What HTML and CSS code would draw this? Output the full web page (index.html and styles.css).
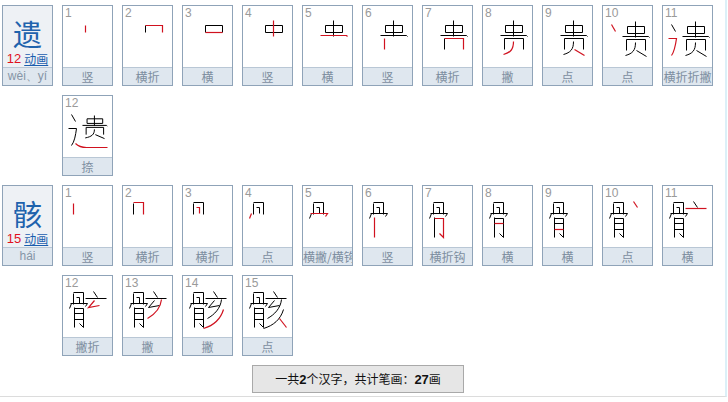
FILE: index.html
```html
<!DOCTYPE html>
<html lang="zh">
<head>
<meta charset="utf-8">
<title>笔顺</title>
<link rel="stylesheet" href="styles.css">
</head>
<body>
<svg class="defs" width="0" height="0" aria-hidden="true">
  <defs>
    <path id="y1" d="M23 20V27" vector-effect="non-scaling-stroke"/>
    <path id="y2" d="M23 20H40V27" vector-effect="non-scaling-stroke"/>
    <path id="y3" d="M23 27H40" vector-effect="non-scaling-stroke"/>
    <path id="y4" d="M31 15V31" vector-effect="non-scaling-stroke"/>
    <path id="y5" d="M18 30H44L45 31" vector-effect="non-scaling-stroke"/>
    <path id="y6" d="M22 33V44" vector-effect="non-scaling-stroke"/>
    <path id="y7" d="M22 33H41V44" vector-effect="non-scaling-stroke"/>
    <path id="y8" d="M31 36C31 44 28 47 21 49" vector-effect="non-scaling-stroke"/>
    <path id="y9" d="M32 44L42 50" vector-effect="non-scaling-stroke"/>
    <path id="y10" d="M9 19L13 26" vector-effect="non-scaling-stroke"/>
    <path id="y11" d="M6 33H14C13 40 12 46 9 50" vector-effect="non-scaling-stroke"/>
    <path id="y12" d="M13 48Q17 52 24 52H45" vector-effect="non-scaling-stroke"/>
    <g id="gui">
      <use href="#y1"/><use href="#y2"/><use href="#y3"/><use href="#y4"/><use href="#y5"/>
      <use href="#y6"/><use href="#y7"/><use href="#y8"/><use href="#y9"/>
    </g>

    <path id="h1" d="M11 18V29" vector-effect="non-scaling-stroke"/>
    <path id="h2" d="M11 17H21V29" vector-effect="non-scaling-stroke"/>
    <path id="h3" d="M14 22H17V28" vector-effect="non-scaling-stroke"/>
    <path id="h4" d="M9 28L7 33" vector-effect="non-scaling-stroke"/>
    <path id="h5" d="M8 28H25L23 31" vector-effect="non-scaling-stroke"/>
    <path id="h6" d="M12 32V52" vector-effect="non-scaling-stroke"/>
    <path id="h7" d="M12 33H21V52L17 48" vector-effect="non-scaling-stroke"/>
    <path id="h8" d="M12 38H21" vector-effect="non-scaling-stroke"/>
    <path id="h9" d="M12 44H21" vector-effect="non-scaling-stroke"/>
    <path id="h10" d="M31 16L35 22" vector-effect="non-scaling-stroke"/>
    <path id="h11" d="M23 23H44" vector-effect="non-scaling-stroke"/>
    <path id="h12" d="M32 25L26 32L37 30" vector-effect="non-scaling-stroke"/>
    <path id="h13" d="M39 24C38 33 32 39 25 43" vector-effect="non-scaling-stroke"/>
    <path id="h14" d="M41 34C38 44 31 50 21 53" vector-effect="non-scaling-stroke"/>
    <path id="h15" d="M37 43L44 52" vector-effect="non-scaling-stroke"/>
    <g id="gu">
      <use href="#h1"/><use href="#h2"/><use href="#h3"/><use href="#h4"/><use href="#h5"/>
      <use href="#h6"/><use href="#h7"/><use href="#h8"/><use href="#h9"/>
    </g>
  </defs>
</svg>

<div class="page">
  <div class="char">
    <div class="head">
      <div class="big">遗</div>
      <div class="meta"><span class="cnt">12</span> <a class="anim" href="#">动画</a></div>
      <div class="py">wèi、yí</div>
    </div>
    <div class="cells">
      <div class="cell"><span class="num">1</span><svg class="pic" viewBox="0.5 0.5 49 61"><use class="r" href="#y1"/></svg><div class="lbl">竖</div></div>
      <div class="cell"><span class="num">2</span><svg class="pic" viewBox="0.5 0.5 49 61"><use class="k" href="#y1"/><use class="r" href="#y2"/></svg><div class="lbl">横折</div></div>
      <div class="cell"><span class="num">3</span><svg class="pic" viewBox="0.5 0.5 49 61"><use class="k" href="#y1"/><use class="k" href="#y2"/><use class="r" href="#y3"/></svg><div class="lbl">横</div></div>
      <div class="cell"><span class="num">4</span><svg class="pic" viewBox="0.5 0.5 49 61"><use class="k" href="#y1"/><use class="k" href="#y2"/><use class="k" href="#y3"/><use class="r" href="#y4"/></svg><div class="lbl">竖</div></div>
      <div class="cell"><span class="num">5</span><svg class="pic" viewBox="0.5 0.5 49 61"><use class="k" href="#y1"/><use class="k" href="#y2"/><use class="k" href="#y3"/><use class="k" href="#y4"/><use class="r" href="#y5"/></svg><div class="lbl">横</div></div>
      <div class="cell"><span class="num">6</span><svg class="pic" viewBox="0.5 0.5 49 61"><use class="k" href="#y1"/><use class="k" href="#y2"/><use class="k" href="#y3"/><use class="k" href="#y4"/><use class="k" href="#y5"/><use class="r" href="#y6"/></svg><div class="lbl">竖</div></div>
      <div class="cell"><span class="num">7</span><svg class="pic" viewBox="0.5 0.5 49 61"><use class="k" href="#y1"/><use class="k" href="#y2"/><use class="k" href="#y3"/><use class="k" href="#y4"/><use class="k" href="#y5"/><use class="k" href="#y6"/><use class="r" href="#y7"/></svg><div class="lbl">横折</div></div>
      <div class="cell"><span class="num">8</span><svg class="pic" viewBox="0.5 0.5 49 61"><use class="k" href="#y1"/><use class="k" href="#y2"/><use class="k" href="#y3"/><use class="k" href="#y4"/><use class="k" href="#y5"/><use class="k" href="#y6"/><use class="k" href="#y7"/><use class="r" href="#y8"/></svg><div class="lbl">撇</div></div>
      <div class="cell"><span class="num">9</span><svg class="pic" viewBox="0.5 0.5 49 61"><use class="k" href="#y1"/><use class="k" href="#y2"/><use class="k" href="#y3"/><use class="k" href="#y4"/><use class="k" href="#y5"/><use class="k" href="#y6"/><use class="k" href="#y7"/><use class="k" href="#y8"/><use class="r" href="#y9"/></svg><div class="lbl">点</div></div>
      <div class="cell"><span class="num">10</span><svg class="pic" viewBox="0.5 0.5 49 61"><use class="k" href="#gui" transform="translate(2 1)"/><use class="r" href="#y10"/></svg><div class="lbl">点</div></div>
      <div class="cell"><span class="num">11</span><svg class="pic" viewBox="0.5 0.5 49 61"><use class="k" href="#gui" transform="translate(2 1)"/><use class="k" href="#y10"/><use class="r" href="#y11"/></svg><div class="lbl">横折折撇</div></div>
      <div class="cell"><span class="num">12</span><svg class="pic" viewBox="0.5 0.5 49 61"><use class="k" href="#gui" transform="translate(3.4 10.1) scale(0.92 0.66)"/><use class="k" href="#y10"/><use class="k" href="#y11"/><use class="r" href="#y12"/></svg><div class="lbl">捺</div></div>
    </div>
  </div>

  <div class="char">
    <div class="head">
      <div class="big">骸</div>
      <div class="meta"><span class="cnt">15</span> <a class="anim" href="#">动画</a></div>
      <div class="py">hái</div>
    </div>
    <div class="cells">
      <div class="cell"><span class="num">1</span><svg class="pic" viewBox="0.5 0.5 49 61"><use class="r" href="#h1"/></svg><div class="lbl">竖</div></div>
      <div class="cell"><span class="num">2</span><svg class="pic" viewBox="0.5 0.5 49 61"><use class="k" href="#h1"/><use class="r" href="#h2"/></svg><div class="lbl">横折</div></div>
      <div class="cell"><span class="num">3</span><svg class="pic" viewBox="0.5 0.5 49 61"><use class="k" href="#h1"/><use class="k" href="#h2"/><use class="r" href="#h3"/></svg><div class="lbl">横折</div></div>
      <div class="cell"><span class="num">4</span><svg class="pic" viewBox="0.5 0.5 49 61"><use class="k" href="#h1"/><use class="k" href="#h2"/><use class="k" href="#h3"/><use class="r" href="#h4"/></svg><div class="lbl">点</div></div>
      <div class="cell"><span class="num">5</span><svg class="pic" viewBox="0.5 0.5 49 61"><use class="k" href="#h1"/><use class="k" href="#h2"/><use class="k" href="#h3"/><use class="k" href="#h4"/><use class="r" href="#h5"/></svg><div class="lbl">横撇/横钩</div></div>
      <div class="cell"><span class="num">6</span><svg class="pic" viewBox="0.5 0.5 49 61"><use class="k" href="#h1"/><use class="k" href="#h2"/><use class="k" href="#h3"/><use class="k" href="#h4"/><use class="k" href="#h5"/><use class="r" href="#h6"/></svg><div class="lbl">竖</div></div>
      <div class="cell"><span class="num">7</span><svg class="pic" viewBox="0.5 0.5 49 61"><use class="k" href="#h1"/><use class="k" href="#h2"/><use class="k" href="#h3"/><use class="k" href="#h4"/><use class="k" href="#h5"/><use class="k" href="#h6"/><use class="r" href="#h7"/></svg><div class="lbl">横折钩</div></div>
      <div class="cell"><span class="num">8</span><svg class="pic" viewBox="0.5 0.5 49 61"><use class="k" href="#h1"/><use class="k" href="#h2"/><use class="k" href="#h3"/><use class="k" href="#h4"/><use class="k" href="#h5"/><use class="k" href="#h6"/><use class="k" href="#h7"/><use class="r" href="#h8"/></svg><div class="lbl">横</div></div>
      <div class="cell"><span class="num">9</span><svg class="pic" viewBox="0.5 0.5 49 61"><use class="k" href="#h1"/><use class="k" href="#h2"/><use class="k" href="#h3"/><use class="k" href="#h4"/><use class="k" href="#h5"/><use class="k" href="#h6"/><use class="k" href="#h7"/><use class="k" href="#h8"/><use class="r" href="#h9"/></svg><div class="lbl">横</div></div>
      <div class="cell"><span class="num">10</span><svg class="pic" viewBox="0.5 0.5 49 61"><use class="k" href="#gu"/><use class="r" href="#h10"/></svg><div class="lbl">点</div></div>
      <div class="cell"><span class="num">11</span><svg class="pic" viewBox="0.5 0.5 49 61"><use class="k" href="#gu"/><use class="k" href="#h10"/><use class="r" href="#h11"/></svg><div class="lbl">横</div></div>
      <div class="cell"><span class="num">12</span><svg class="pic" viewBox="0.5 0.5 49 61"><use class="k" href="#gu"/><use class="k" href="#h10"/><use class="k" href="#h11"/><use class="r" href="#h12"/></svg><div class="lbl">撇折</div></div>
      <div class="cell"><span class="num">13</span><svg class="pic" viewBox="0.5 0.5 49 61"><use class="k" href="#gu"/><use class="k" href="#h10"/><use class="k" href="#h11"/><use class="k" href="#h12"/><use class="r" href="#h13"/></svg><div class="lbl">撇</div></div>
      <div class="cell"><span class="num">14</span><svg class="pic" viewBox="0.5 0.5 49 61"><use class="k" href="#gu"/><use class="k" href="#h10"/><use class="k" href="#h11"/><use class="k" href="#h12"/><use class="k" href="#h13"/><use class="r" href="#h14"/></svg><div class="lbl">撇</div></div>
      <div class="cell"><span class="num">15</span><svg class="pic" viewBox="0.5 0.5 49 61"><use class="k" href="#gu"/><use class="k" href="#h10"/><use class="k" href="#h11"/><use class="k" href="#h12"/><use class="k" href="#h13"/><use class="k" href="#h14"/><use class="r" href="#h15"/></svg><div class="lbl">点</div></div>
    </div>
  </div>

  <div class="summary">一共<b>2</b>个汉字，共计笔画：<b>27</b>画</div>
</div>
</body>
</html>
```

FILE: styles.css
```css
* {
  box-sizing: border-box;
}

body {
  margin: 0;
  background: #fff;
  font-family: "Noto Sans CJK SC", "Liberation Sans", sans-serif;
}

.defs {
  position: absolute;
  width: 0;
  height: 0;
  overflow: hidden;
}

.page {
  width: 727px;
  padding: 5px 0 3px 2px;
  border-right: 2px solid #dcf0f8;
  border-bottom: 1px solid #dcdcdc;
  display: flex;
  flex-direction: column;
  gap: 9px;
}

.char {
  display: flex;
  align-items: flex-start;
  gap: 9px;
}

.head {
  width: 51px;
  height: 81px;
  flex: none;
  border: 1px solid #8fa3b8;
  background: #eef1f5;
  display: flex;
  flex-direction: column;
}

.big {
  height: 46px;
  padding-top: 12px;
  font-size: 29px;
  line-height: 30px;
  text-align: center;
  color: #1f63ad;
}

.meta {
  height: 15px;
  display: flex;
  justify-content: center;
  align-items: flex-start;
  gap: 3px;
  white-space: nowrap;
}

.cnt {
  display: block;
  height: 13px;
  color: #e0101e;
  font-family: "Liberation Sans", sans-serif;
  font-size: 13px;
  line-height: 13px;
}

.anim {
  display: block;
  height: 14px;
  color: #1a5eae;
  font-size: 12px;
  line-height: 13px;
  text-decoration: underline;
}

.py {
  height: 18px;
  border-top: 1px solid #b9c7d5;
  background: #dfe7ef;
  color: #8595a6;
  font-family: "Liberation Sans", sans-serif;
  font-size: 12px;
  line-height: 17px;
  text-align: center;
  white-space: nowrap;
}

.cells {
  flex: 1;
  display: flex;
  flex-wrap: wrap;
  gap: 9px;
}

.cell {
  position: relative;
  width: 51px;
  height: 81px;
  border: 1px solid #8fa3b8;
  background: #fff;
  display: flex;
  flex-direction: column;
}

.num {
  position: absolute;
  left: 2px;
  top: 1px;
  font-family: "Liberation Sans", sans-serif;
  font-size: 12px;
  line-height: 13px;
  color: #9a9a9a;
}

.pic {
  display: block;
  width: 49px;
  height: 61px;
  fill: none;
  stroke-linecap: butt;
  stroke-linejoin: miter;
}

.k {
  stroke: #000;
  stroke-width: 1;
}

.r {
  stroke: #d0121f;
  stroke-width: 1.2;
}

.lbl {
  height: 18px;
  border-top: 1px solid #b9c7d5;
  background: #dfe7ef;
  color: #7d8ea0;
  font-size: 12px;
  line-height: 17px;
  text-align: center;
  white-space: nowrap;
  overflow: hidden;
}

.summary {
  align-self: flex-start;
  margin-left: 250px;
  width: 212px;
  height: 28px;
  border: 1px solid #a9a9a9;
  background: #e6e6e6;
  color: #111;
  font-size: 12px;
  line-height: 26px;
  text-align: center;
  white-space: nowrap;
}

.summary b {
  font-family: "Liberation Sans", sans-serif;
  font-weight: bold;
  font-size: 13px;
}
```
